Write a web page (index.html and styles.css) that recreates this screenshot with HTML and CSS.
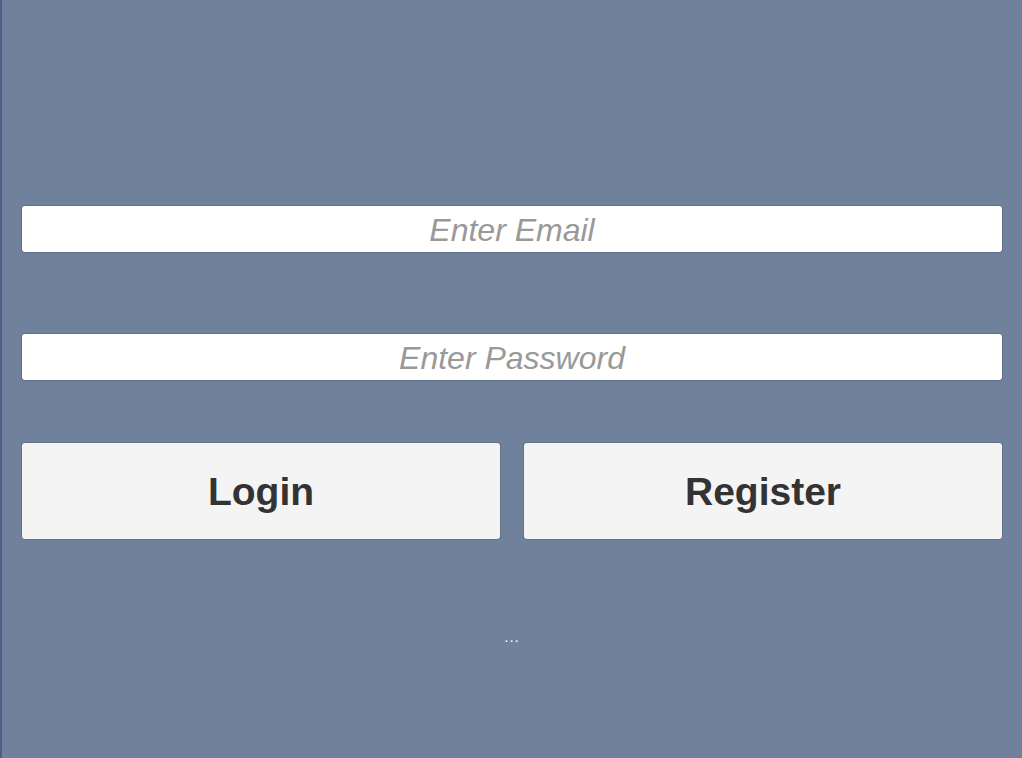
FILE: index.html
```html
<!DOCTYPE html>
<html lang="en">
<head>
<meta charset="utf-8">
<title>Login</title>
<link rel="stylesheet" href="styles.css">
</head>
<body>
<main class="screen">
  <form class="login-form">
    <input class="field field-email" type="email" placeholder="Enter Email">
    <input class="field field-password" type="password" placeholder="Enter Password">
    <div class="actions">
      <button type="button" class="btn">Login</button>
      <button type="button" class="btn">Register</button>
    </div>
    <p class="status">...</p>
  </form>
</main>
</body>
</html>
```
FILE: styles.css
```css
html, body {
  margin: 0;
  padding: 0;
  height: 100%;
}

body {
  background: #70819c;
  font-family: "Liberation Sans", Arial, sans-serif;
}

.screen {
  box-sizing: border-box;
  min-height: 100%;
  border-left: 2px solid #4d6088;
  padding: 206px 20px 0 20px;
}

.login-form {
  display: flex;
  flex-direction: column;
}

.field {
  box-sizing: border-box;
  height: 46px;
  width: 100%;
  border: none;
  border-radius: 3px;
  background: #fff;
  box-shadow: 0 0 0 1px rgba(70, 80, 100, 0.35);
  text-align: center;
  font-family: inherit;
  font-size: 32px;
  font-style: italic;
  color: #333;
  padding: 2px 0 0 0;
  outline: none;
}

.field::placeholder {
  color: #999;
  font-style: italic;
}

.field-password {
  margin-top: 82px;
}

.actions {
  margin-top: 63px;
  display: grid;
  grid-template-columns: 1fr 1fr;
  gap: 24px;
}

.btn {
  height: 96px;
  border: none;
  border-radius: 3px;
  background: #f4f4f4;
  box-shadow: 0 0 0 1px rgba(70, 80, 100, 0.3);
  font-family: inherit;
  font-size: 39px;
  font-weight: bold;
  color: #333;
  padding: 2px 0 0 0;
}

.status {
  margin: 90px 0 0 0;
  text-align: center;
  color: #ffffff;
  font-size: 15px;
  line-height: 16px;
  letter-spacing: 1px;
}
```
